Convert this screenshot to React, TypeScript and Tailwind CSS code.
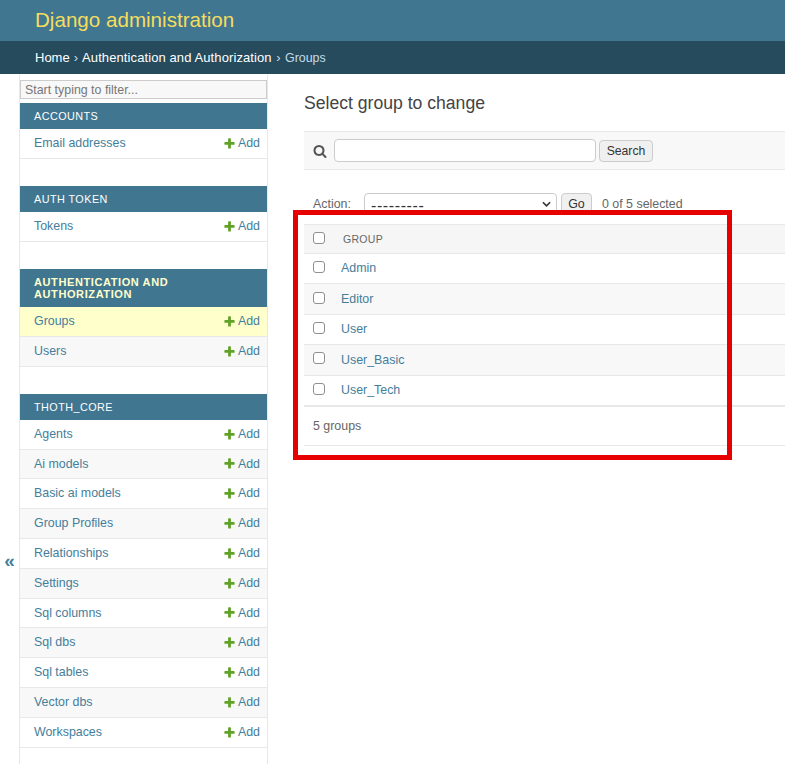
const models = [
  {
    title: "Accounts",
    rows: ["Email addresses"],
  },
  {
    title: "Auth Token",
    rows: ["Tokens"],
  },
  {
    title: "Authentication and Authorization",
    rows: ["Groups", "Users"],
    active: true,
  },
  {
    title: "Thoth_Core",
    rows: [
      "Agents",
      "Ai models",
      "Basic ai models",
      "Group Profiles",
      "Relationships",
      "Settings",
      "Sql columns",
      "Sql dbs",
      "Sql tables",
      "Vector dbs",
      "Workspaces",
    ],
  },
];

const groups = ["Admin", "Editor", "User", "User_Basic", "User_Tech"];

function AddIcon() {
  return (
    <svg viewBox="0 0 1792 1792" className="w-[13px] h-[13px] mr-[2px]" fill="#5fa225">
      <path d="M1600 796v192q0 40-28 68t-68 28h-416v416q0 40-28 68t-68 28h-192q-40 0-68-28t-28-68v-416h-416q-40 0-68-28t-28-68v-192q0-40 28-68t68-28h416v-416q0-40 28-68t68-28h192q40 0 68 28t28 68v416h416q40 0 68 28t28 68z" />
    </svg>
  );
}

function SearchIcon() {
  return (
    <svg viewBox="0 0 1792 1792" className="w-[14px] h-[14px]" fill="#555555">
      <path d="M1216 832q0-185-131.5-316.5t-316.5-131.5-316.5 131.5-131.5 316.5 131.5 316.5 316.5 131.5 316.5-131.5 131.5-316.5zm512 832q0 52-38 90t-90 38q-54 0-90-38l-343-342q-179 124-399 124-143 0-273.5-55.5t-225-150-150-225-55.5-273.5 55.5-273.5 150-225 225-150 273.5-55.5 273.5 55.5 225 150 150 225 55.5 273.5q0 220-124 399l343 343q37 37 37 90z" />
    </svg>
  );
}

function Checkbox() {
  return (
    <input
      type="checkbox"
      className="appearance-none w-[12px] h-[12px] mb-[3px] bg-white border border-[#8f8f8f] rounded-[3px] block"
    />
  );
}

function Sidebar() {
  return (
    <div className="w-[249px] shrink-0 border-x border-[#e8e8e8]">
      <input
        placeholder="Start typing to filter..."
        className="block w-full h-[19px] mt-[6px] mb-[4px] px-[4px] bg-[#f8f8f8] border border-[#cccccc] text-[12.4px] placeholder:text-[#777777] outline-none"
      />
      {models.map((m) => (
        <div key={m.title} className="mb-[27.2px]">
          <div
            className={
              m.active
                ? "bg-[#417690] px-[14px] pt-[7px] pb-[7px] text-[11px] leading-[12px] font-bold uppercase tracking-[0.6px] text-[#ffffcc]"
                : "bg-[#417690] px-[14px] h-[26px] pt-[1px] flex items-center text-[10.8px] font-normal uppercase tracking-[0.46px] text-white"
            }
          >
            {m.title}
          </div>
          {m.rows.map((r, i) => (
            <div
              key={r}
              className={
                "h-[29.8px] flex items-center justify-between pl-[14px] pr-[7px] border-b border-[#e8e8e8] text-[12.4px] text-[#447e9b] " +
                (m.active && i === 0 ? "bg-[#ffffcc]" : i % 2 === 1 ? "bg-[#f8f8f8]" : "bg-white")
              }
            >
              <span>{r}</span>
              <span className="flex items-center">
                <AddIcon />
                Add
              </span>
            </div>
          ))}
        </div>
      ))}
    </div>
  );
}

function Content() {
  return (
    <div className="flex-1 min-w-0 pl-[36px] pt-[18px] text-[12.4px] text-[#333333]">
      <h1 className="text-[17.6px] leading-[22px] font-normal text-[#444444] mb-[17px]">
        Select group to change
      </h1>

      <div className="h-[39px] flex items-center pl-[9px] bg-[#f8f8f8] border-y border-[#e8e8e8]">
        <SearchIcon />
        <input className="w-[262px] h-[23px] ml-[7px] bg-white border border-[#cccccc] rounded-[4px]" />
        <button className="w-[54px] h-[22px] ml-[3px] pt-[1px] bg-[#f0f0f0] border border-[#cccccc] rounded-[4px] text-[#333333] text-[12.2px]">
          Search
        </button>
      </div>

      <div className="h-[21px] mt-[23px] flex items-center pl-[9px] text-[#666666]">
        <span className="w-[51px] pt-[1px]">Action:</span>
        <div className="relative w-[193px] h-[21px]">
          <select className="appearance-none w-full h-full pl-[6px] bg-white border border-[#cccccc] rounded-[4px] text-[#333333] text-[16px] tracking-[0.6px]">
            <option>---------</option>
          </select>
          <svg viewBox="0 0 10 6" className="absolute right-[6px] top-[8px] w-[9px] h-[6px]" fill="none" stroke="#333333" strokeWidth="1.8">
            <path d="M1 1l4 4 4-4" />
          </svg>
        </div>
        <button className="w-[31px] h-[21px] ml-[4px] pt-[1px] bg-[#f0f0f0] border border-[#cccccc] rounded-[4px] text-[#333333] text-[12.4px]">
          Go
        </button>
        <span className="ml-[10px] pt-[1px]">0 of 5 selected</span>
      </div>

      <div className="mt-[10px] h-[30px] flex items-center pl-[9px] bg-[#f6f6f6] border-y border-[#e8e8e8]">
        <Checkbox />
        <span className="ml-[18px] mt-[2px] text-[10.5px] tracking-[0.3px] text-[#666666]">GROUP</span>
      </div>
      {groups.map((g, i) => (
        <div
          key={g}
          className={
            "h-[30.4px] flex items-center pl-[9px] border-b border-[#e8e8e8] " +
            (i % 2 === 1 ? "bg-[#f8f8f8]" : "bg-white")
          }
        >
          <Checkbox />
          <span className="ml-[16px] text-[#447e9b]">{g}</span>
        </div>
      ))}
      <div className="h-[40px] flex items-center pl-[9px] border-t border-b border-[#e8e8e8] text-[#666666]">
        5 groups
      </div>
    </div>
  );
}

export default function App() {
  return (
    <div className="relative h-[764px] overflow-hidden bg-white font-['Liberation_Sans',Arial,sans-serif]">
      <div className="h-[41px] bg-[#417690] pl-[35px] pb-[1px] flex items-center text-[20.6px] text-[#f5dd5d]">
        Django administration
      </div>
      <div className="h-[33px] bg-[#264b5d] pl-[35px] flex items-center text-[13px] text-[#c4dce8]">
        <span className="text-white">Home</span>
        <span className="mx-[4px]">›</span>
        <span className="text-white tracking-[0.1px]">Authentication and Authorization</span>
        <span className="mx-[4.5px]">›</span>
        <span className="text-[12.4px] pt-[1px]">Groups</span>
      </div>
      <div className="flex h-[978px]">
        <div className="w-[19px] shrink-0 pb-[4px] flex items-center justify-center text-[19px] font-bold text-[#447e9b]">«</div>
        <Sidebar />
        <Content />
      </div>
      {/* red annotation box drawn over the table */}
      <div className="absolute left-[293px] top-[210px] w-[439px] h-[250px] border-[5px] border-[#e60000]" />
    </div>
  );
}
